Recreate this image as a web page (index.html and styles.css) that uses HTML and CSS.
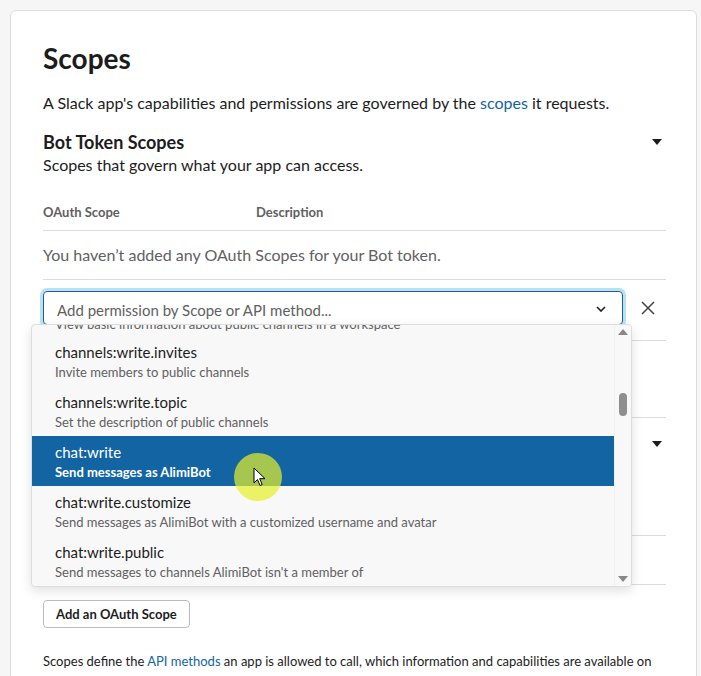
FILE: index.html
```html
<!DOCTYPE html>
<html>
<head>
<meta charset="utf-8">
<link rel="stylesheet" href="styles.css">
</head>
<body>
<div class="card">
  <h1 class="title">Scopes</h1>
  <p class="lead">A Slack app's capabilities and permissions are governed by the <a class="link">scopes</a> it requests.</p>

  <div class="section-head">
    <div>
      <h2 class="sub">Bot Token Scopes</h2>
      <p class="subdesc">Scopes that govern what your app can access.</p>
    </div>
    <span class="caret"></span>
  </div>

  <div class="thead">
    <span class="th th-scope">OAuth Scope</span>
    <span class="th">Description</span>
  </div>
  <div class="empty">You haven’t added any OAuth Scopes for your Bot token.</div>

  <div class="add-row">
    <div class="select">
      <span class="placeholder">Add permission by Scope or API method...</span>
      <svg class="chev" width="10" height="6" viewBox="0 0 10 6"><path d="M1 1l4 4 4-4" fill="none" stroke="#1d1c1d" stroke-width="1.6"/></svg>
    </div>
    <svg class="close" width="16" height="16" viewBox="0 0 16 16"><path d="M2 2l12 12M14 2L2 14" stroke="#454245" stroke-width="1.5"/></svg>

    <div class="menu">
      <div class="menu-list">
        <div class="opt opt-cut">
          <div class="opt-desc">View basic information about public channels in a workspace</div>
        </div>
        <div class="opt">
          <div class="opt-name">channels:write.invites</div>
          <div class="opt-desc">Invite members to public channels</div>
        </div>
        <div class="opt">
          <div class="opt-name">channels:write.topic</div>
          <div class="opt-desc">Set the description of public channels</div>
        </div>
        <div class="opt opt-active">
          <div class="opt-name">chat:write</div>
          <div class="opt-desc">Send messages as AlimiBot</div>
        </div>
        <div class="opt">
          <div class="opt-name">chat:write.customize</div>
          <div class="opt-desc">Send messages as AlimiBot with a customized username and avatar</div>
        </div>
        <div class="opt">
          <div class="opt-name">chat:write.public</div>
          <div class="opt-desc">Send messages to channels AlimiBot isn't a member of</div>
        </div>
      </div>
      <div class="scrollbar">
        <span class="arr-up"></span>
        <span class="thumb"></span>
        <span class="arr-down"></span>
      </div>
      <div class="cursor-spot"></div>
      <svg class="cursor" width="14" height="20" viewBox="0 0 14 20"><path d="M1 1v15l3.5-3.5 2.5 6 2.2-1-2.5-5.8H12z" fill="#fff" stroke="#000" stroke-width="1"/></svg>
    </div>
  </div>

  <div class="under">
    <div class="under-row r1"></div>
    <div class="under-row r2"></div>
    <div class="under-head"><span class="caret"></span></div>
    <div class="under-row r3"></div>
    <div class="under-row r4"></div>
  </div>

  <button class="btn">Add an OAuth Scope</button>

  <p class="foot">Scopes define the <a class="link">API methods</a> an app is allowed to call, which information and capabilities are available on the workspace it's installed on. Many scopes are restricted to specific resources like channels or files.</p>
</div>
</body>
</html>
```
FILE: styles.css
```css
html, body { margin: 0; padding: 0; }
body {
  background: #f6f6f6;
  font-family: Lato, "Noto Sans", sans-serif;
  color: #1d1c1d;
  padding: 10px 4px 0 10px;
  height: 676px;
  overflow: hidden;
  box-sizing: border-box;
}
.card {
  background: #fff;
  border: 1px solid #dddddd;
  border-radius: 6px;
  padding: 27px 30px 0 32px;
  height: 700px;
  box-sizing: border-box;
}
.title {
  margin: 0;
  font-size: 28px;
  font-weight: 700;
  line-height: 40px;
}
.lead {
  margin: 14px 0 0;
  font-size: 16px;
  line-height: 22px;
}
.link { color: #1264a3; text-decoration: none; }
.section-head {
  display: flex;
  justify-content: space-between;
  align-items: flex-start;
  margin-top: 16px;
  padding-right: 4px;
}
.sub {
  margin: 0;
  font-size: 18px;
  font-weight: 700;
  line-height: 24px;
}
.subdesc {
  margin: 0;
  font-size: 16px;
  line-height: 22px;
}
.caret {
  display: block;
  width: 0; height: 0;
  border-left: 5px solid transparent;
  border-right: 5px solid transparent;
  border-top: 6px solid #1d1c1d;
  margin-top: 9px;
}
.thead {
  display: flex;
  margin-top: 27px;
  padding-bottom: 9px;
  border-bottom: 1px solid #dddddd;
  font-size: 13px;
  font-weight: 700;
  color: #616061;
  line-height: 18px;
}
.th-scope { width: 213px; }
.empty {
  font-size: 16px;
  color: #616061;
  line-height: 22px;
  padding: 13px 0 13px;
  border-bottom: 1px solid #dddddd;
}
.add-row {
  position: relative;
  display: flex;
  align-items: center;
  margin-top: 11px;
}
.select {
  width: 580px;
  height: 34px;
  box-sizing: border-box;
  border: 1px solid #1264a3;
  border-radius: 4px;
  box-shadow: 0 0 0 3px rgba(29,155,209,0.3);
  display: flex;
  align-items: center;
  justify-content: space-between;
  padding: 0 16px 0 13px;
}
.placeholder {
  font-size: 15px;
  color: #616061;
  padding-top: 3px;
}
.chev { margin-top: 1px; }
.close { margin-left: 17px; }
.menu {
  position: absolute;
  left: -12px;
  top: 33px;
  width: 601px;
  height: 263px;
  box-sizing: border-box;
  background: #f8f8f8;
  border: 1px solid #dddddd;
  border-radius: 4px;
  box-shadow: 0 4px 12px rgba(0,0,0,0.12);
  overflow: hidden;
  display: flex;
  z-index: 5;
}
.menu-list {
  flex: 1;
  position: relative;
}
.opt {
  height: 50px;
  box-sizing: border-box;
  padding: 6px 23px 0;
}
.opt-cut {
  height: 11px;
  padding-top: 0;
  position: relative;
  overflow: hidden;
}
.opt-cut .opt-desc { position: absolute; top: -11px; left: 23px; }
.opt-name {
  font-size: 15px;
  line-height: 20px;
  color: #1d1c1d;
}
.opt-desc {
  font-size: 13px;
  line-height: 20px;
  color: #616061;
}
.opt-active { background: #1264a3; }
.opt-active .opt-name { color: #fff; }
.opt-active .opt-desc { color: #fff; font-weight: 700; }
.scrollbar {
  width: 16px;
  position: relative;
  border-left: 1px solid #f0f0f0;
  background: #f8f8f8;
}
.arr-up, .arr-down {
  position: absolute;
  left: 3px;
  width: 0; height: 0;
  border-left: 5px solid transparent;
  border-right: 5px solid transparent;
}
.arr-up { top: 4px; border-bottom: 6px solid #888; }
.arr-down { bottom: 4px; border-top: 6px solid #888; }
.thumb {
  position: absolute;
  left: 4px;
  top: 68px;
  width: 8px;
  height: 23px;
  border-radius: 4px;
  background: #8f8f8f;
}
.cursor-spot {
  position: absolute;
  left: 202px;
  top: 128px;
  width: 48px;
  height: 48px;
  border-radius: 50%;
  background: rgba(230,240,40,0.7);
}
.cursor {
  position: absolute;
  left: 221px;
  top: 142px;
}
.under { margin-top: 0; }
.under-row { border-bottom: 1px solid #dddddd; }
.r1 { height: 15px; }
.r2 { height: 76px; }
.under-head { height: 0; display: flex; justify-content: flex-end; padding-right: 4px; }
.under-head .caret { margin-top: 23px; }
.r3 { height: 117px; }
.r4 { height: 48px; }
.btn {
  margin-top: 15px;
  display: block;
  font-family: Lato, "Noto Sans", sans-serif;
  font-size: 13px;
  font-weight: 700;
  color: #1d1c1d;
  background: #fff;
  border: 1px solid #bbbbbb;
  border-radius: 4px;
  height: 28px;
  padding: 0 12px;
}
.foot {
  margin: 23px 0 0;
  font-size: 13px;
  line-height: 20px;
  width: 622px;
}
```
